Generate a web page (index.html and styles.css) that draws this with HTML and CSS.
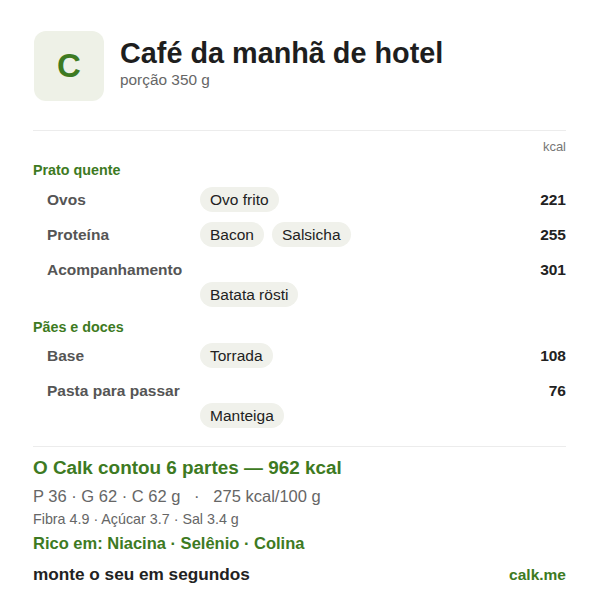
FILE: index.html
```html
<!doctype html>
<html lang="pt">

<head>
  <meta charset="utf-8">
  <meta name="viewport" content="width=device-width, initial-scale=1.0">
  <title>Café da manhã de hotel</title>
  <link rel="stylesheet" href="styles.css">
</head>

<body>
  <div class="card">
    <div class="header">
      <div class="logo">C</div>
      <div class="title-box">
        <h1>Café da manhã de hotel</h1>
        <div class="portion">porção 350 g</div>
      </div>
    </div>

    <hr>

    <div class="unit">kcal</div>

    <div class="section">Prato quente</div>
    <div class="row">
      <div class="label">Ovos</div>
      <div class="chips"><span class="chip">Ovo frito</span></div>
      <div class="kcal">221</div>
    </div>
    <div class="row">
      <div class="label">Proteína</div>
      <div class="chips"><span class="chip">Bacon</span><span class="chip">Salsicha</span></div>
      <div class="kcal">255</div>
    </div>
    <div class="row stack">
      <div class="label">Acompanhamento</div>
      <div class="kcal">301</div>
      <div class="chips"><span class="chip">Batata rösti</span></div>
    </div>

    <div class="section next">Pães e doces</div>
    <div class="row">
      <div class="label">Base</div>
      <div class="chips"><span class="chip">Torrada</span></div>
      <div class="kcal">108</div>
    </div>
    <div class="row stack">
      <div class="label">Pasta para passar</div>
      <div class="kcal">76</div>
      <div class="chips"><span class="chip">Manteiga</span></div>
    </div>

    <hr class="bottom">

    <div class="summary">O Calk contou 6 partes — 962 kcal</div>
    <div class="macros">P 36 · G 62 · C 62 g &nbsp; · &nbsp; 275 kcal/100 g</div>
    <div class="extra">Fibra 4.9 · Açúcar 3.7 · Sal 3.4 g</div>
    <div class="rich">Rico em: Niacina · Selênio · Colina</div>

    <div class="footer">
      <span>monte o seu em segundos</span>
      <span class="brand">calk.me</span>
    </div>
  </div>
</body>
</html>
```

FILE: styles.css
```css
html {
  font-family: "Liberation Sans", Arial, sans-serif;
  font-size: 15.5px;
  color: #222;
}

body {
  margin: 0;
  background: #fff;
}

.card {
  padding: 31px 34px 0 33px;
}

/* header */
.header {
  display: flex;
  align-items: flex-start;
  gap: 16px;
}

.logo {
  width: 70px;
  height: 70px;
  border-radius: 12px;
  background-color: #eef1e7;
  color: #3d7a22;
  font-size: 33px;
  font-weight: 700;
  display: flex;
  align-items: center;
  justify-content: center;
  margin-left: 1px;
}

.title-box {
  margin-top: 7px;
}

h1 {
  font-size: 28.8px;
  line-height: 30px;
  font-weight: 700;
  margin: 0;
  color: #1e1e1e;
}

.portion {
  font-size: 15.4px;
  line-height: 18px;
  margin-top: 3px;
  color: #666;
}

hr {
  border: 0;
  border-top: 1px solid #ececec;
  margin: 29px 0 0;
}

.unit {
  text-align: right;
  font-size: 13px;
  line-height: 16px;
  color: #777;
  margin-top: 8px;
}

.section {
  color: #3d7a22;
  font-weight: 700;
  font-size: 14.3px;
  line-height: 16px;
  margin-top: 7px;
}

.section.next {
  margin-top: 12px;
}

.row {
  display: grid;
  grid-template-columns: 153px 1fr auto;
  align-items: center;
  padding-left: 14px;
  margin-top: 10px;
}

.section + .row {
  margin-top: 9px;
}

.section.next + .row {
  margin-top: 8px;
}

.label {
  font-weight: 700;
  color: #555;
  line-height: 25px;
  white-space: nowrap;
}

.chips {
  display: flex;
  gap: 8px;
}

.stack .chips {
  grid-column: 2;
}

.chip {
  background-color: #f0f1eb;
  border-radius: 13px;
  height: 25px;
  line-height: 25px;
  padding: 0 10px;
  color: #222;
}

.kcal {
  font-weight: 700;
  text-align: right;
  color: #222;
}

hr.bottom {
  margin-top: 18px;
}

.summary {
  color: #3d7a22;
  font-size: 18.9px;
  line-height: 22px;
  font-weight: 700;
  margin-top: 10px;
}

.macros {
  font-size: 16.5px;
  line-height: 20px;
  color: #666;
  margin-top: 7px;
}

.extra {
  font-size: 14.3px;
  line-height: 16px;
  color: #666;
  margin-top: 5px;
}

.rich {
  color: #3d7a22;
  font-size: 16.5px;
  line-height: 20px;
  font-weight: 700;
  margin-top: 6px;
}

.footer {
  display: flex;
  justify-content: space-between;
  align-items: baseline;
  font-size: 17.2px;
  line-height: 20px;
  font-weight: 700;
  margin-top: 11px;
}

.brand {
  color: #3d7a22;
  font-size: 15.5px;
}
```
